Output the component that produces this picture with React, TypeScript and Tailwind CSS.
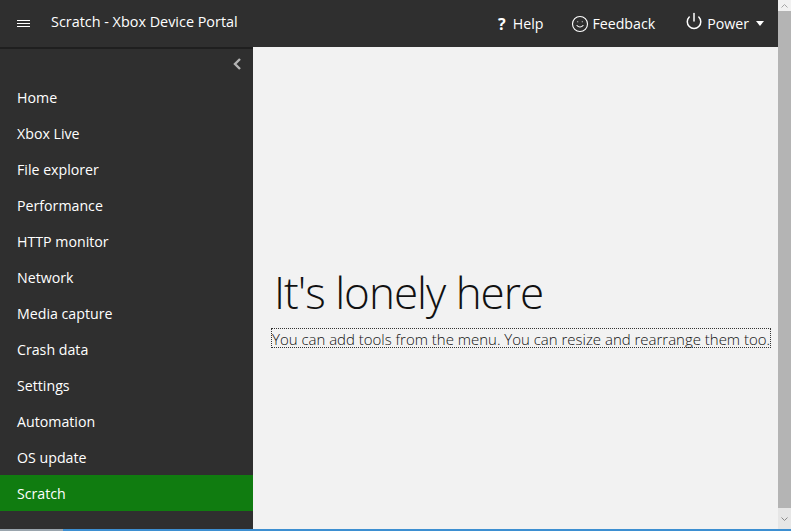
import { Power, Smile } from "lucide-react";

const menuItems = [
  "Home",
  "Xbox Live",
  "File explorer",
  "Performance",
  "HTTP monitor",
  "Network",
  "Media capture",
  "Crash data",
  "Settings",
  "Automation",
  "OS update",
];

export default function App() {
  return (
    <div className="flex h-[531px] w-[791px] flex-col overflow-hidden bg-[#f2f2f2] font-['Open_Sans',sans-serif]">
      <div className="flex min-h-0 flex-1">
        <div className="flex min-w-0 flex-1 flex-col">
          {/* Top bar */}
          <header className="flex h-[47px] shrink-0 items-center bg-[#2f2f2f] text-[14.4px] text-white">
            <div className="ml-[17px] flex w-[13px] flex-col gap-[2px]">
              <span className="h-px bg-white" />
              <span className="h-px bg-white" />
              <span className="h-px bg-white" />
            </div>
            <span className="ml-[21px] -mt-[4px]">Scratch - Xbox Device Portal</span>
            <div className="ml-auto flex items-center text-[14.2px]">
              <span className="mr-[7px] text-[16px] font-bold">?</span>
              <span>Help</span>
              <Smile className="ml-[28px] h-[18px] w-[18px]" strokeWidth={1.5} />
              <span className="ml-[3px]">Feedback</span>
              <Power className="ml-[30px] -mt-[5px] h-[18px] w-[18px]" strokeWidth={2} />
              <span className="ml-[4px]">Power</span>
              <span className="ml-[7px] mr-[14px] h-0 w-0 border-x-4 border-t-[5px] border-x-transparent border-t-white" />
            </div>
          </header>

          <div className="flex min-h-0 flex-1">
            {/* Sidebar */}
            <nav className="flex w-[253px] shrink-0 flex-col border-t-2 border-[#1f1f1f] bg-[#2f2f2f] text-[14.2px] text-white">
              <div className="flex h-[30px] shrink-0 items-center justify-end pr-[12px]">
                <svg width="8" height="12" viewBox="0 0 8 12" fill="none" stroke="#b4b4b4" strokeWidth="2.4">
                  <path d="M7 1 2 6l5 5" />
                </svg>
              </div>
              {menuItems.map((item) => (
                <div key={item} className="flex h-9 items-center pl-[17px] pt-[2px]">
                  {item}
                </div>
              ))}
              <div className="flex h-9 items-center bg-[#107c10] pl-[17px] pt-[2px]">Scratch</div>
            </nav>

            {/* Empty state */}
            <main className="flex min-w-0 flex-1 flex-col items-start pl-[18px] pt-[214px] text-[#111]">
              <h1 className="ml-[3px] text-[44px] font-light leading-[62px] tracking-[-1px]">It's lonely here</h1>
              <p className="mt-[5px] h-[20px] whitespace-nowrap border border-dotted border-[#333] text-[14.97px] font-light leading-[20px]">
                You can add tools from the menu. You can resize and rearrange them too.
              </p>
            </main>
          </div>
        </div>

        {/* Scrollbar */}
        <div className="flex w-[13px] shrink-0 flex-col bg-[#e6e6e6]">
          <div className="flex h-[11px] shrink-0 items-center justify-center bg-[#f1f1f1]">
            <svg width="7" height="4" viewBox="0 0 7 4" fill="none" stroke="#a6a6a6">
              <path d="M0.5 3.5 3.5 0.5 6.5 3.5" />
            </svg>
          </div>
          <div className="h-[497px] shrink-0 bg-[#b4b4b4]" />
          <div className="flex flex-1 items-center justify-center">
            <svg width="7" height="4" viewBox="0 0 7 4" fill="none" stroke="#8a8a8a">
              <path d="M0.5 0.5 3.5 3.5 6.5 0.5" />
            </svg>
          </div>
        </div>
      </div>
      <div className="flex h-[2px] shrink-0 bg-[#3d8fd1]">
        <div className="w-[63px] bg-[#9aa5ad]" />
      </div>
    </div>
  );
}
